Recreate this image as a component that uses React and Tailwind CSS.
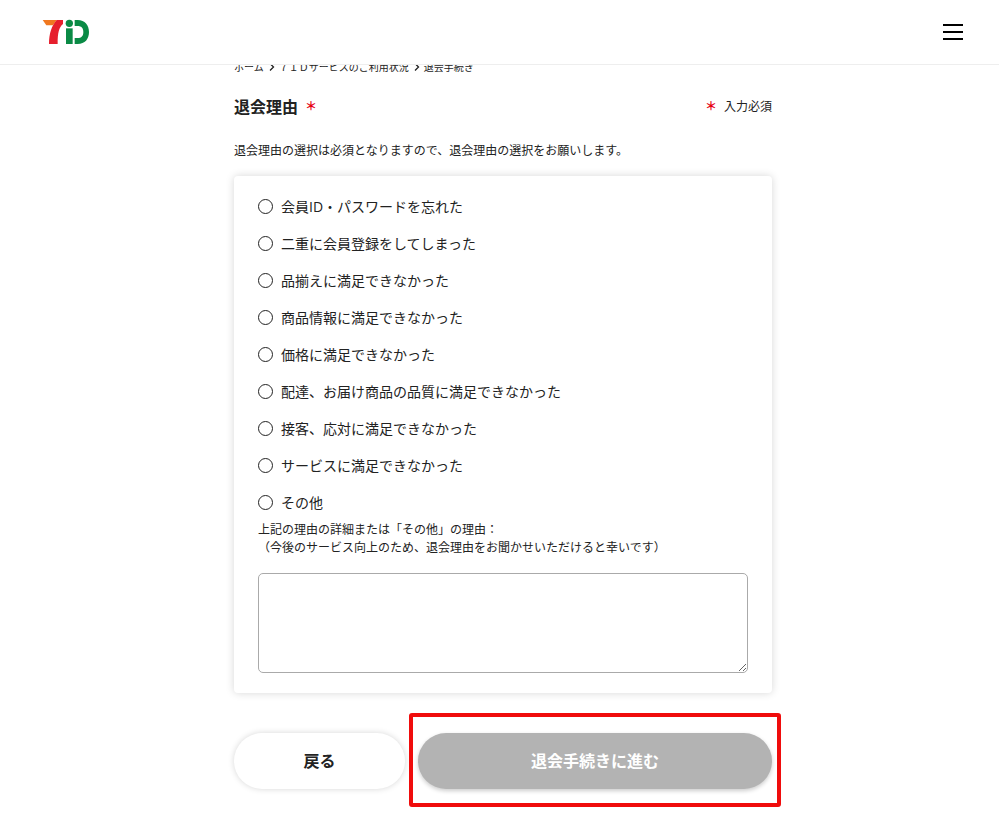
import React, { useState } from 'react';

const reasons = [
  '会員ID・パスワードを忘れた',
  '二重に会員登録をしてしまった',
  '品揃えに満足できなかった',
  '商品情報に満足できなかった',
  '価格に満足できなかった',
  '配達、お届け商品の品質に満足できなかった',
  '接客、応対に満足できなかった',
  'サービスに満足できなかった',
  'その他',
];

function Logo() {
  return (
    <svg className="w-12 h-[26px]" viewBox="0 0 144 78" aria-hidden="true">
      <path d="M2 3h42L33 19H13z" fill="#f07820" />
      <path d="M44 3h19v12C51 25 47 41 47 75H21C21 44 29 20 44 3z" fill="#e61f2d" />
      <circle cx="82" cy="13" r="11" fill="#0a8a45" />
      <path d="M72 28h20v47H72z" fill="#0a8a45" />
      <path d="M98 3h9c22 0 34 15 34 36s-12 36-34 36H98V57h9c11 0 17-6 17-18s-6-18-17-18H98z" fill="#0a8a45" />
    </svg>
  );
}

function Chevron() {
  return (
    <svg className="w-[7px] h-2 mx-1" viewBox="0 0 7 8" fill="none" stroke="#222" strokeWidth="1.3" aria-hidden="true">
      <path d="M2 0.5L5.5 4L2 7.5" />
    </svg>
  );
}

function Required() {
  return <span className="inline-block w-4 text-center text-xs leading-6 font-bold text-[#e60012]">＊</span>;
}

function Header() {
  return (
    <header className="fixed inset-x-0 top-0 z-10 h-[65px] bg-white border-b border-[#eee] flex items-center justify-between pl-[42px] pr-9">
      <a href="#" aria-label="7iD">
        <Logo />
      </a>
      <button type="button" aria-label="メニュー" className="flex flex-col gap-[5px]">
        <span className="block w-5 h-[2px] bg-black"></span>
        <span className="block w-5 h-[2px] bg-black"></span>
        <span className="block w-5 h-[2px] bg-black"></span>
      </button>
    </header>
  );
}

export default function App() {
  const [reason, setReason] = useState('');
  const [detail, setDetail] = useState('');

  return (
    <div className="min-h-screen bg-white text-[#222] font-['Open_Sans','Noto_Sans_CJK_JP',sans-serif]" lang="ja">
      <Header />

      <main className="pt-[59px] pb-12 pl-[7px]">
        <div className="max-w-[538px] mx-auto">
          <nav className="flex items-center h-4 text-[10px] leading-4">
            <a href="#">ホーム</a>
            <Chevron />
            <a href="#">７ＩＤサービスのご利用状況</a>
            <Chevron />
            <span>退会手続き</span>
          </nav>

          <div className="flex items-center justify-between mt-5">
            <h1 className="flex items-center gap-[5px] text-base leading-6 font-bold">
              退会理由
              <Required />
            </h1>
            <p className="flex items-center gap-[5px] text-xs leading-6">
              <Required />
              入力必須
            </p>
          </div>

          <p className="mt-[22px] text-xs leading-5">
            退会理由の選択は必須となりますので、退会理由の選択をお願いします。
          </p>

          <form onSubmit={(e) => e.preventDefault()}>
            <div className="mt-[15px] px-6 pt-3 pb-5 rounded bg-white shadow-[0_0_8px_rgba(0,0,0,0.16)]">
              {reasons.map((item, i) => (
                <div key={item} className="flex items-center h-[37px]">
                  <input
                    type="radio"
                    id={`reason-${i}`}
                    name="reason"
                    value={item}
                    checked={reason === item}
                    onChange={() => setReason(item)}
                    className="appearance-none w-[15px] h-[15px] rounded-full border border-[#222] bg-white checked:border-4"
                  />
                  <label htmlFor={`reason-${i}`} className="pl-2 text-sm">
                    {item}
                  </label>
                </div>
              ))}
              <label htmlFor="detail" className="block text-xs leading-[18px]">
                上記の理由の詳細または「その他」の理由：
                <br />
                （今後のサービス向上のため、退会理由をお聞かせいただけると幸いです）
              </label>
              <textarea
                id="detail"
                value={detail}
                onChange={(e) => setDetail(e.target.value)}
                className="block w-full h-[100px] mt-4 p-2 text-sm border border-[#aaa] rounded-[5px] bg-white resize"
              />
            </div>

            <div className="flex gap-[13px] mt-10">
              <button
                type="button"
                className="w-[171px] h-14 rounded-full bg-white text-base font-bold shadow-[0_0_6px_rgba(0,0,0,0.16)]"
              >
                戻る
              </button>
              <div className="relative flex-1">
                <button
                  type="submit"
                  className="w-full h-14 rounded-full bg-[#b3b3b3] text-white text-base font-bold shadow-[0_2px_4px_rgba(0,0,0,0.2)]"
                >
                  退会手続きに進む
                </button>
                <div className="absolute -inset-x-[9px] -top-5 -bottom-[18px] border-4 border-[#f00c0c] rounded-[3px] pointer-events-none"></div>
              </div>
            </div>
          </form>
        </div>
      </main>
    </div>
  );
}
